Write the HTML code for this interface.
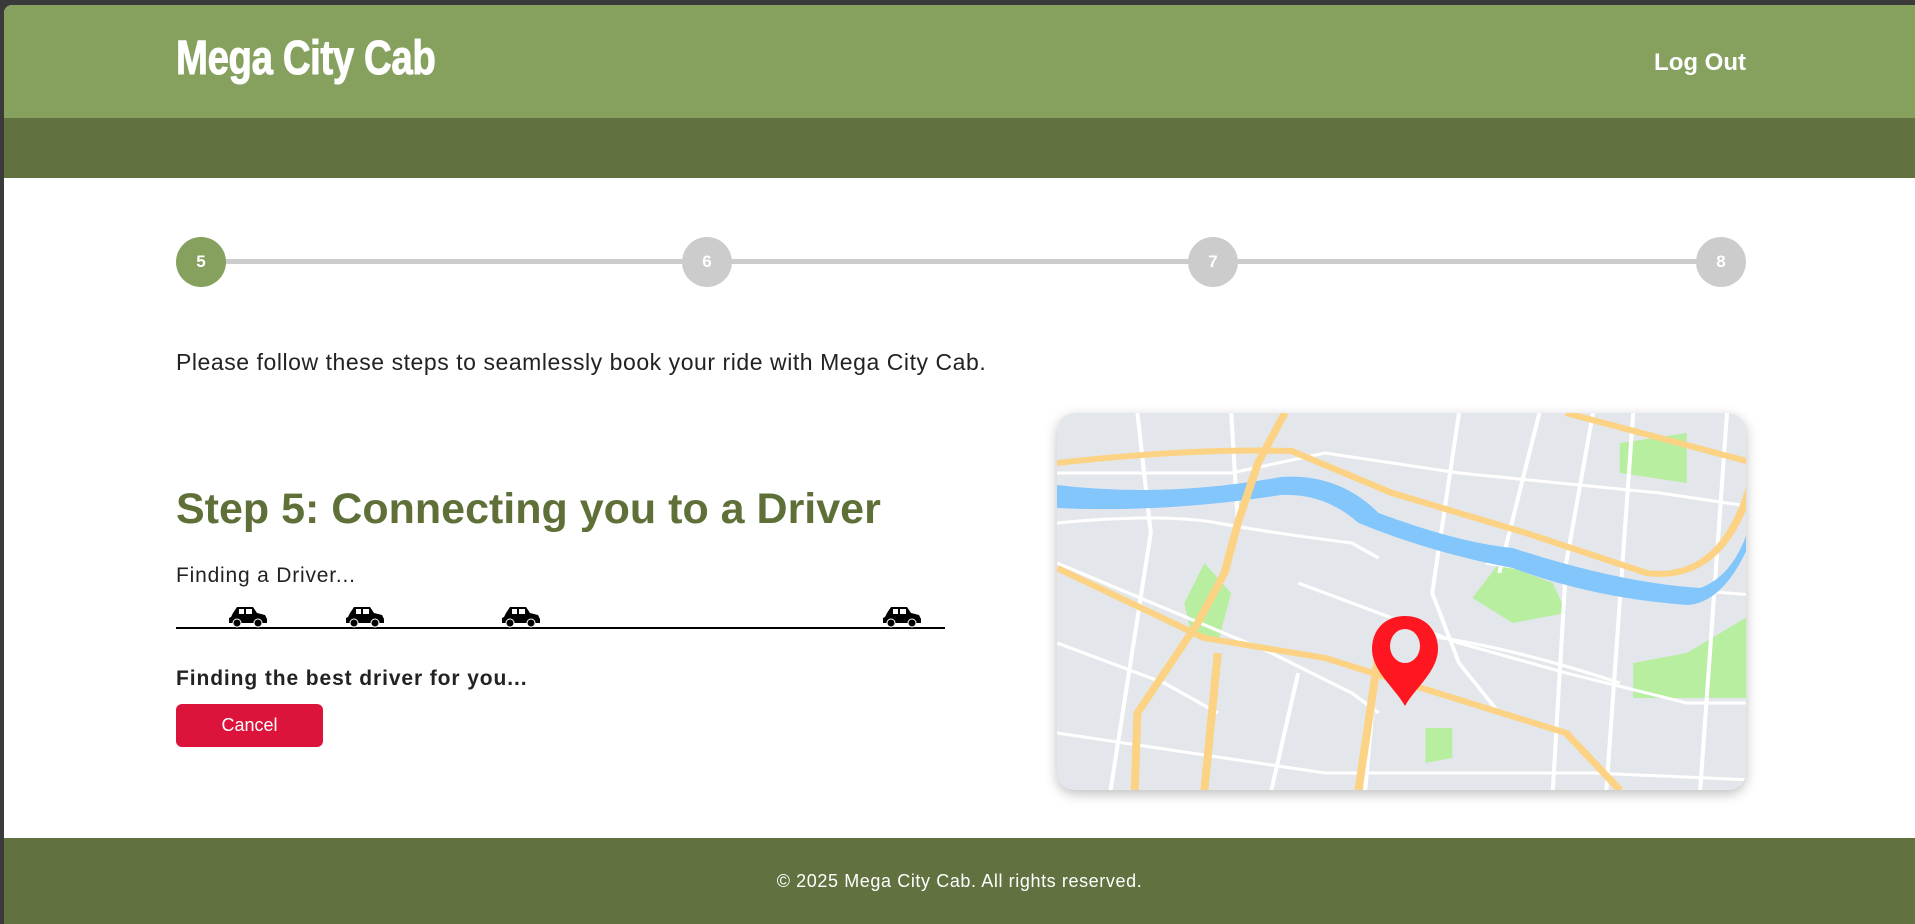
<!DOCTYPE html>
<html><head><meta charset="utf-8"><style>
*{margin:0;padding:0;box-sizing:border-box}
body{width:1915px;height:924px;background:#3a3a3a;overflow:hidden;font-family:"Liberation Sans",sans-serif;position:relative}
.page{position:absolute;left:4px;top:5px;width:1911px;height:919px;background:#fff;border-top-left-radius:8px;overflow:hidden}
.hdr{position:absolute;left:0;top:0;width:100%;height:113px;background:#86a05e}
.sub{position:absolute;left:0;top:113px;width:100%;height:60px;background:#617240}
.logo{position:absolute;left:172px;top:30px;color:#fff;font-weight:bold;font-size:48px;letter-spacing:-0.5px;transform:scaleX(0.8);transform-origin:left top;line-height:1;-webkit-text-stroke:1px #fff}
.logout{position:absolute;right:169px;top:44px;color:#fff;font-weight:bold;font-size:24px}
.line{position:absolute;left:196px;top:254px;width:1520px;height:5px;background:#ccc}
.c{position:absolute;top:232px;width:50px;height:50px;border-radius:50%;background:#ccc;color:#fff;font-weight:bold;font-size:17px;text-align:center;line-height:50px}
.intro{position:absolute;left:172px;top:344px;font-size:23px;letter-spacing:0.55px;color:#222}
h2{position:absolute;left:172px;top:480px;font-size:43px;color:#5e7038;font-weight:bold}
.fd{position:absolute;left:172px;top:559px;font-size:21px;letter-spacing:0.8px;color:#222}
.road{position:absolute;left:172px;top:622px;width:769px;height:2px;background:#000}
.car{position:absolute;top:600px}
.best{position:absolute;left:172px;top:662px;font-size:21px;letter-spacing:0.9px;font-weight:bold;color:#222}
.btn{position:absolute;left:172px;top:699px;width:147px;height:43px;background:#dc143c;border-radius:6px;color:#fff;font-size:18px;text-align:center;line-height:43px}
.map{position:absolute;left:1053px;top:408px;width:689px;height:377px;border-radius:18px;overflow:hidden;box-shadow:0 4px 12px rgba(0,0,0,.25)}
.ftr{position:absolute;left:0;top:833px;width:100%;height:86px;background:#617240;color:#fff;font-size:18px;letter-spacing:0.6px;text-align:center;line-height:86px}
</style></head><body><div class="page">
<div class="hdr"></div><div class="sub"></div>
<div class="logo">Mega City Cab</div>
<div class="logout">Log Out</div>
<div class="line"></div>
<div class="c" style="left:172px;background:#86a05e">5</div>
<div class="c" style="left:678px">6</div>
<div class="c" style="left:1184px">7</div>
<div class="c" style="left:1692px">8</div>
<div class="intro">Please follow these steps to seamlessly book your ride with Mega City Cab.</div>
<h2>Step 5: Connecting you to a Driver</h2>
<div class="fd">Finding a Driver...</div>
<div class="road"></div>
<svg width="0" height="0" style="position:absolute"><defs><g id="car"><path d="M2 12 L4 8 L8 2 L24 2 L28 8 L36 10 L38 14 L38 18 L0 18 L0 13Z" fill="#000"/><rect x="10" y="4" width="5" height="5" fill="#fff"/><rect x="17" y="4" width="6" height="5" fill="#fff"/><circle cx="8" cy="18" r="4" fill="#000" stroke="#fff" stroke-width="1"/><circle cx="29" cy="18" r="4" fill="#000" stroke="#fff" stroke-width="1"/></g></defs></svg>
<svg class="car" style="left:225px" width="40" height="24"><use href="#car"/></svg>
<svg class="car" style="left:342px" width="40" height="24"><use href="#car"/></svg>
<svg class="car" style="left:498px" width="40" height="24"><use href="#car"/></svg>
<svg class="car" style="left:879px" width="40" height="24"><use href="#car"/></svg>
<div class="best">Finding the best driver for you...</div>
<div class="btn">Cancel</div>
<div class="map"><svg width="689" height="377" viewBox="0 0 689 377">
<rect width="689" height="377" fill="#e3e7ec"/>
<g transform="scale(1.34,1)">
<path d="M420 30 L470 20 L470 70 L420 60Z M310 185 L330 150 L370 170 L380 200 L340 210Z M110 150 L130 180 L120 230 L100 220 L95 190Z M430 250 L470 240 L520 200 L520 285 L430 285Z M275 315 L295 315 L295 345 L275 350Z" fill="#b8eea0"/>
<g stroke="#fff" stroke-width="3" fill="none">
<path d="M0 110 Q80 100 120 110 T220 130 L240 145"/><path d="M0 150 L160 240 L220 280 L240 300"/><path d="M0 230 L80 270 L120 300"/><path d="M60 0 L70 120 L40 377"/><path d="M130 0 L135 110"/><path d="M300 0 L280 180 L300 250 L330 300"/><path d="M360 0 L330 160"/><path d="M400 0 L380 150 L370 377"/><path d="M430 0 L410 377"/><path d="M500 0 L480 377"/><path d="M180 170 L300 230 L380 260 L470 290 L689 290"/><path d="M0 320 L200 360 L400 360 L689 377"/><path d="M180 260 L160 377"/><path d="M240 230 L230 377"/><path d="M0 60 L130 60 L200 40 L300 60 L450 80 L600 110"/><path d="M320 150 L420 170 L500 180 L600 190"/><path d="M260 220 Q330 230 420 270"/>
</g>
<path d="M0 72 Q80 85 167 64 Q210 60 240 100 Q300 130 340 135 Q420 170 480 175 Q510 160 520 95 L520 120 Q500 190 470 192 Q400 185 340 155 Q280 140 225 110 Q200 80 167 82 Q80 100 0 95Z" fill="#83c6fc"/>
<g stroke="#fcd384" stroke-width="6" fill="none">
<path d="M0 50 Q100 35 175 38 L250 80 L350 120 L440 160 Q500 170 520 60"/>
<path d="M170 0 L150 50 L135 110 L125 160 L105 210 L80 260 L60 300 L58 377"/>
<path d="M0 155 L110 225 L200 245 L380 320 L420 377"/>
<path d="M120 240 L110 377"/>
<path d="M240 240 L225 377"/>
<path d="M380 0 L520 50"/>
</g>
</g>
<path d="M348 203 C327 203 315 218 315 236 C315 258 338 275 348 293 C358 275 381 258 381 236 C381 218 369 203 348 203Z" fill="#fe1720"/>
<ellipse cx="348" cy="233" rx="15" ry="17" fill="#e3e7ec"/>
</svg></div>
<div class="ftr">© 2025 Mega City Cab. All rights reserved.</div>
</div></body></html>
